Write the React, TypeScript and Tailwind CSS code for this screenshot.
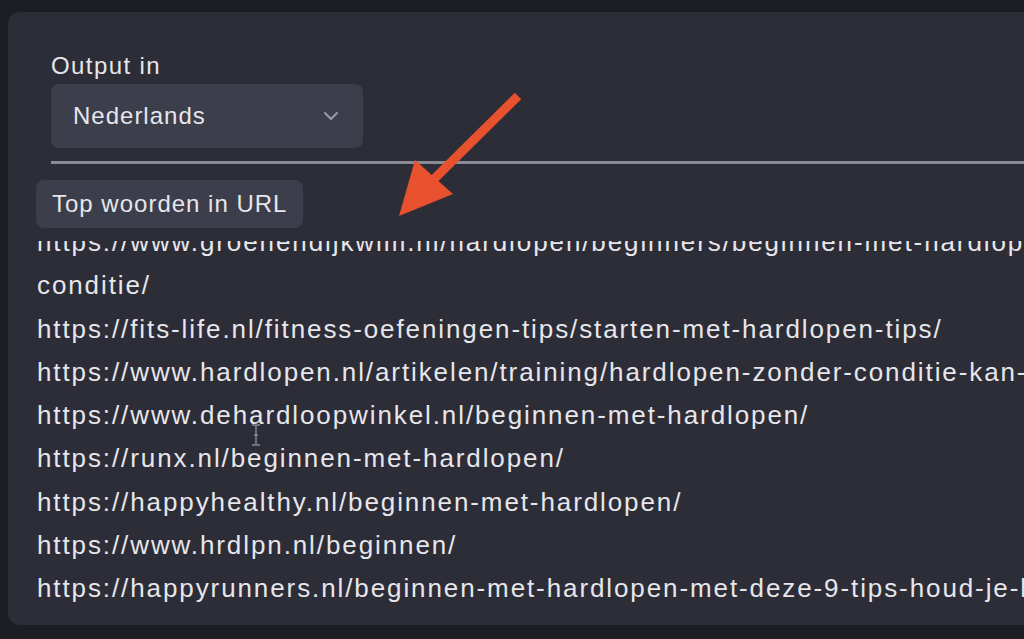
import { ChevronDown } from "lucide-react";

// eerste url loopt over twee regels in het tekstvak
const lines = [
  "https://www.groenendijkwim.nl/hardlopen/beginners/beginnen-met-hardlopen-zonder-",
  "conditie/",
  "https://fits-life.nl/fitness-oefeningen-tips/starten-met-hardlopen-tips/",
  "https://www.hardlopen.nl/artikelen/training/hardlopen-zonder-conditie-kan-dat/",
  "https://www.dehardloopwinkel.nl/beginnen-met-hardlopen/",
  "https://runx.nl/beginnen-met-hardlopen/",
  "https://happyhealthy.nl/beginnen-met-hardlopen/",
  "https://www.hrdlpn.nl/beginnen/",
  "https://happyrunners.nl/beginnen-met-hardlopen-met-deze-9-tips-houd-je-het-vol/",
];

export default function App() {
  return (
    <div
      className="relative h-[639px] w-[1024px] overflow-hidden bg-[#1d1d24] pl-2 pt-3 text-[#e6e6eb]"
      style={{ fontFamily: '"Liberation Sans", Arial, sans-serif' }}
    >
      <div className="h-[613px] w-[1040px] rounded-l-xl bg-[#2d2d38] pl-[28px]">
        {/* taal keuze */}
        <div className="px-[15px] pt-[40px]">
          <div className="text-[24px] leading-[28px] tracking-[1.4px]">Output in</div>
          <div className="mt-[4px] flex h-[64px] w-[312px] items-center justify-between rounded-lg bg-[#3d3e4b] pl-[22px] pr-[20px]">
            <span className="text-[24px] tracking-[1px]">Nederlands</span>
            <ChevronDown className="h-6 w-6 text-[#9a9ba6]" strokeWidth={2} />
          </div>
          <div className="mt-[13px] h-[3px] bg-[#8b8b96]" />
        </div>

        <div className="mt-[16px] inline-flex h-[48px] items-center rounded-lg bg-[#3d3e4b] px-[16px] text-[24px] tracking-[1px]">
          Top woorden in URL
        </div>

        {/* lijst met urls, al een stukje gescrold */}
        <div className="mt-[13px] h-[370px] overflow-hidden pl-[1px]">
          <div className="-mt-[20px] text-[26px] leading-[43.3px] tracking-[1.9px]">
            {lines.map((u) => (
              <div key={u} className="whitespace-nowrap">
                {u}
              </div>
            ))}
          </div>
        </div>
      </div>

      {/* pijl annotatie */}
      <svg className="absolute left-[385px] top-[88px]" width="145" height="140" viewBox="0 0 145 140">
        <line x1="133" y1="8" x2="40" y2="100" stroke="#e8512e" strokeWidth="9" />
        <polygon points="14,128 30,72 68,106" fill="#e8512e" />
      </svg>

      {/* muiscursor */}
      <svg className="absolute left-[251px] top-[424px]" width="10" height="22" viewBox="0 0 10 22">
        <path d="M1 1h3l1 1 1-1h3M5 2v18M1 21h3l1-1 1 1h3M3 11h4" stroke="#8a8a92" strokeWidth="1.4" fill="none" />
      </svg>
    </div>
  );
}
